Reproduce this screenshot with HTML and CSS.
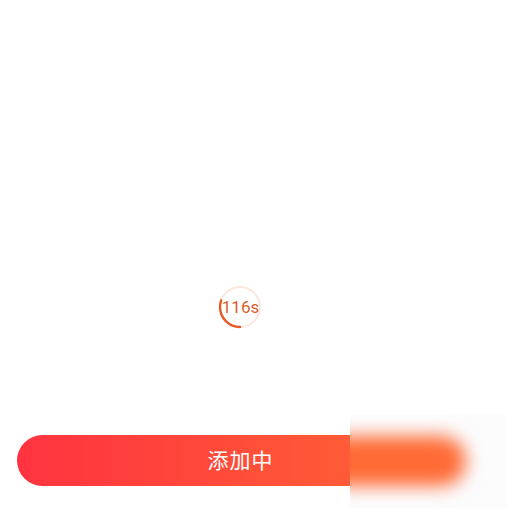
FILE: index.html
```html
<!DOCTYPE html>
<html lang="zh">
<head>
<meta charset="utf-8">
<title>添加中</title>
<link rel="stylesheet" href="styles.css">
</head>
<body>
<div class="page">
  <div class="timer">
    <svg class="ring" width="44" height="44" viewBox="0 0 44 44">
      <circle cx="22" cy="22" r="20" fill="none" stroke="#fce6de" stroke-width="2"/>
      <circle cx="22" cy="22" r="20" fill="none" stroke="#e65b25" stroke-width="2.4" stroke-linecap="round" stroke-dasharray="38 200" transform="rotate(90 22 22)"/>
    </svg>
    <span class="count">116s</span>
  </div>
  <div class="footer">
    <button class="add-btn">添加中</button>
  </div>
  <div class="blur-patch"><div class="blur-pill"></div></div>
</div>
</body>
</html>
```
FILE: styles.css
```css
html, body {
  margin: 0;
  padding: 0;
  background: #ffffff;
}
.page {
  position: relative;
  width: 507px;
  height: 508px;
  padding-right: 27px;
  box-sizing: border-box;
  overflow: hidden;
  font-family: "Noto Sans CJK SC", "Noto Sans", sans-serif;
  display: flex;
  flex-direction: column;
  align-items: center;
}
.timer {
  margin-top: 285px;
  width: 44px;
  height: 44px;
  position: relative;
  display: flex;
  align-items: center;
  justify-content: center;
}
.ring {
  position: absolute;
  left: 0;
  top: 0;
}
.count {
  position: relative;
  font-family: "Roboto", "Noto Sans", sans-serif;
  font-size: 17px;
  color: #d65f2c;
  line-height: 1;
  margin-left: 1px;
}
.footer {
  margin-top: 106px;
  width: 100%;
  padding: 0 16px 0 17px;
  box-sizing: border-box;
}
.add-btn {
  display: block;
  width: 100%;
  height: 51px;
  border: none;
  border-radius: 26px;
  background: linear-gradient(90deg, #ff3340 0%, #ff4a3a 45%, #ff6a35 100%);
  color: #ffffff;
  font-family: "Noto Sans CJK SC", sans-serif;
  font-size: 21px;
  letter-spacing: 1px;
  padding: 0 0 3px 0;
}
.blur-patch {
  position: absolute;
  left: 350px;
  top: 415px;
  width: 157px;
  height: 93px;
  background: #fcfcfd;
  overflow: hidden;
}
.blur-pill {
  position: absolute;
  left: -30px;
  top: 21px;
  width: 146px;
  height: 50px;
  border-radius: 25px;
  background: #ff6a35;
  filter: blur(9px);
}
```
